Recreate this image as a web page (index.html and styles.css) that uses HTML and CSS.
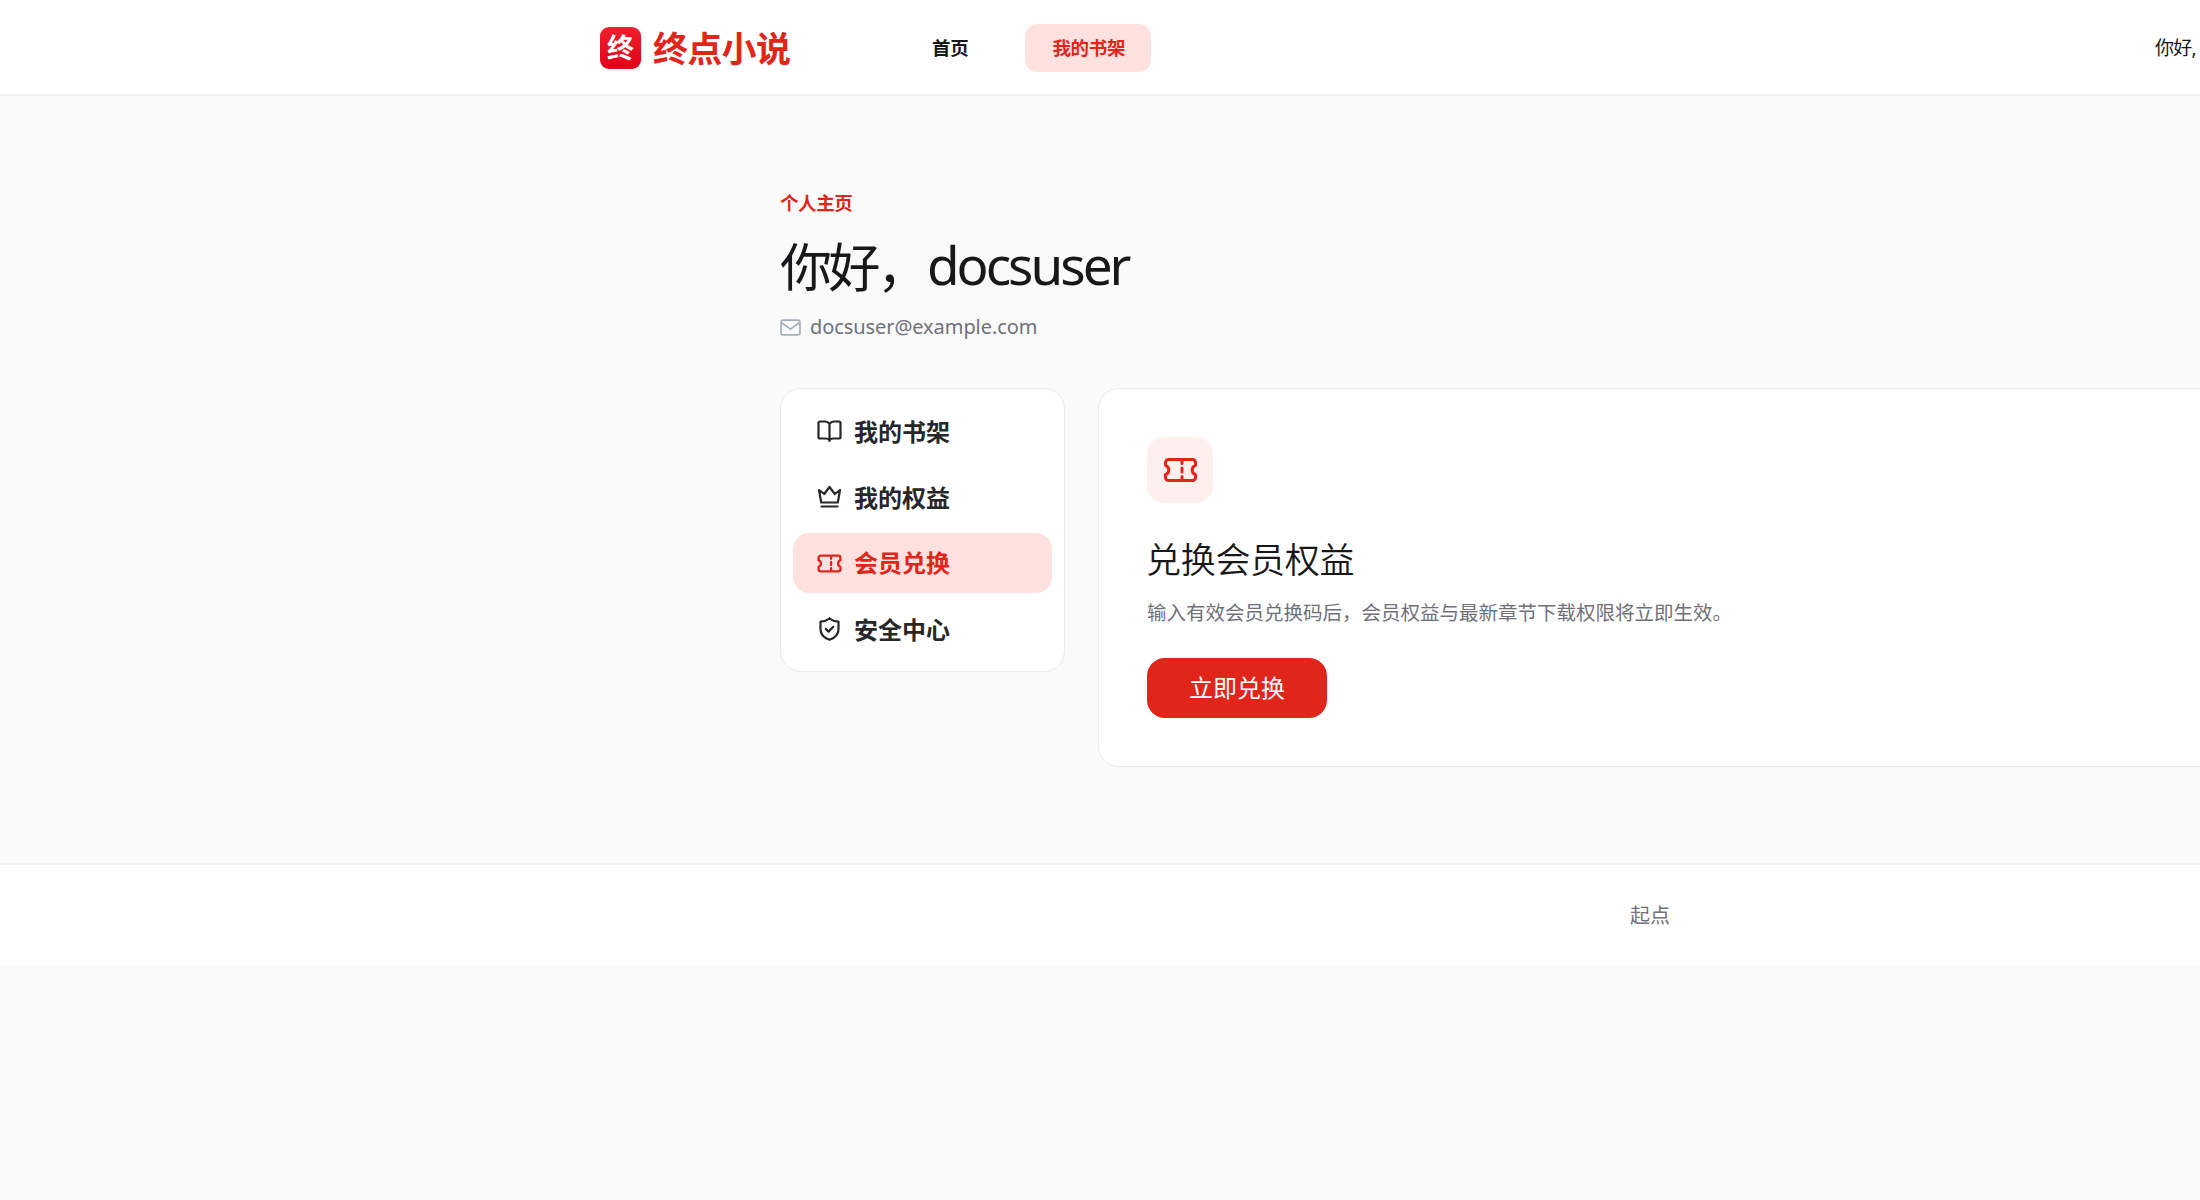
FILE: index.html
```
<!DOCTYPE html>
<html lang="zh-CN">
<head>
<meta charset="utf-8">
<title>终点小说</title>
<link rel="stylesheet" href="styles.css">
</head>
<body>
<div class="page">
  <header class="header">
    <div class="header-inner">
      <a class="logo"><span class="logo-mark">终</span><span class="logo-name">终点小说</span></a>
      <nav class="nav">
        <a class="nav-link">首页</a>
        <a class="nav-link is-active">我的书架</a>
      </nav>
      <div class="greeting">你好,</div>
    </div>
  </header>

  <main class="main">
    <div class="eyebrow">个人主页</div>
    <h1 class="title"><span class="title-hello">你好，</span><span class="title-name">docsuser</span></h1>
    <div class="email">
      <svg class="mail-icon" viewBox="0 0 20 16"><rect x="1" y="1" width="18" height="14" rx="1.5"/><path d="M1.5 3.5 10 9.5l8.500-6"/></svg>
      <span>docsuser@example.com</span>
    </div>
    <div class="columns">
      <aside class="sidebar">
        <a class="item"><svg class="icon" viewBox="0 0 24 24"><path d="M12 5v17M12 5c-1-1.500-2.500-2.500-4.500-2.500H2.500A1.500 1.500 0 0 0 1 4v14a1.500 1.500 0 0 0 1.500 1.500H8c2 0 3.300.4 4 1.500.7-1.100 2-1.500 4-1.500h5.500A1.500 1.500 0 0 0 23 18V4a1.500 1.500 0 0 0-1.500-1.500h-5C14.500 2.500 13 3.500 12 5"/></svg><span>我的书架</span></a>
        <a class="item"><svg class="icon" viewBox="0 0 24 24"><path d="M1.500 5 6.700 9 12 2l5.300 7 5.200-4-2.200 12.500H3.700zM4 21.500h16"/></svg><span>我的权益</span></a>
        <a class="item is-active"><svg class="icon wide" viewBox="0 0 24 18"><path d="M3.500 1.500h17a2 2 0 0 1 2 2v2.300a3.400 3.400 0 0 0 0 6.400v2.300a2 2 0 0 1-2 2h-17a2 2 0 0 1-2-2v-2.300a3.400 3.400 0 0 0 0-6.400V3.500a2 2 0 0 1 2-2M13.500 1.500v3M13.500 7.500v3M13.500 13.500v3"/></svg><span>会员兑换</span></a>
        <a class="item"><svg class="icon" viewBox="0 0 24 24"><path d="M12 1.500c2.500 2 5.500 3 9 3.200v7.500c0 5.300-4 8.800-9 10.600-5-1.800-9-5.300-9-10.600V4.700C6.500 4.500 9.500 3.500 12 1.500M8.300 12l2.700 2.600 4.800-4.800"/></svg><span>安全中心</span></a>
      </aside>
      <section class="card">
        <div class="tile"><svg class="tile-icon" viewBox="0 0 33 24"><path d="M4.500 1.500h24a3 3 0 0 1 3 3v2.800a5 5 0 0 0 0 9.400v2.800a3 3 0 0 1-3 3h-24a3 3 0 0 1-3-3v-2.800a5 5 0 0 0 0-9.400V4.500a3 3 0 0 1 3-3M18 1.500v4M18 10v4M18 18.500v4"/></svg></div>
        <h2 class="card-title">兑换会员权益</h2>
        <p class="card-text">输入有效会员兑换码后，会员权益与最新章节下载权限将立即生效。</p>
        <button class="button">立即兑换</button>
      </section>
    </div>
  </main>

  <footer class="footer">起点</footer>
</div>
</body>
</html>
```
FILE: styles.css
```
* { box-sizing: border-box; }
html { overflow: hidden; background: #fafafa; }
body {
  margin: 0;
  overflow: hidden;
  background: #fafafa;
  color: #18181b;
  font-family: "Noto Sans", "Noto Sans CJK SC", sans-serif;
}
svg { fill: none; stroke: currentColor; stroke-linecap: round; stroke-linejoin: round; flex: none; }
.page { width: 2200px; }

.header { height: 96px; background: #fff; border-bottom: 2px solid #f2f2f3; }
.header-inner { height: 96px; padding-left: 600px; display: flex; align-items: center; }
.logo { display: flex; align-items: center; gap: 12px; width: 304px; color: #e1251b; }
.logo-mark {
  width: 41px; height: 42px; border-radius: 9px;
  background: linear-gradient(#f0202d, #e00018);
  color: #fff; font-size: 27px; font-weight: 600; line-height: 41px; text-align: center;
}
.logo-name { font-size: 35px; font-weight: 700; line-height: 42px; letter-spacing: -0.7px; padding-top: 2px; }
.nav { display: flex; gap: 30px; }
.nav-link { height: 48px; padding: 0 27px 0 28px; border-radius: 12px; font-size: 18.5px; line-height: 47px; font-weight: 600; letter-spacing: -0.3px; color: #18181b; white-space: nowrap; }
.nav-link.is-active { width: 126px; padding: 0 27px; background: #ffe2e0; color: #e1251b; }
.greeting { margin-left: auto; width: 45px; font-size: 19px; line-height: 28px; letter-spacing: -0.8px; white-space: nowrap; }

.main { height: 767px; padding: 93px 0 0 780px; }
.eyebrow { font-size: 18.5px; line-height: 27px; font-weight: 600; letter-spacing: -0.4px; color: #e1251b; }
.title { display: flex; margin: 10px 0 0; line-height: 76px; font-weight: 400; }
.title-hello { width: 147px; padding-top: 3px; font-size: 52px; letter-spacing: -3.500px; white-space: nowrap; }
.title-name { padding-top: 1px; font-size: 53px; letter-spacing: -3px; }
.email { display: flex; align-items: center; gap: 9px; height: 28px; margin-top: 7px; font-size: 20px; letter-spacing: -0.080px; color: #71717a; }
.mail-icon { width: 21px; height: 17px; margin-top: 2px; color: #a5afbc; stroke-width: 1.600; }
.columns { display: grid; grid-template-columns: 285px 1fr; gap: 33px; align-items: start; margin-top: 48px; }

.sidebar { display: grid; gap: 6px; height: 284px; padding: 12px; background: #fff; border: 1.500px solid #eaeaec; border-radius: 21px; }
.item { display: flex; align-items: center; gap: 12px; height: 60px; padding: 0 24px; border-radius: 16px; font-size: 24px; font-weight: 600; color: #27272a; }
.item span { margin-top: -1px; }
.item.is-active span { margin-top: -4px; }
.item.is-active { background: #ffe2e0; color: #e1251b; }
.icon { width: 25px; height: 24px; stroke-width: 2.200; }
.icon.wide { height: 19px; }

.card { height: 379px; padding: 48px; background: #fff; border: 1.500px solid #eaeaec; border-right: 0; border-radius: 21px 0 0 21px; }
.tile { display: grid; place-items: center; width: 66px; height: 66px; border-radius: 17px; background: #ffefee; color: #e1251b; }
.tile-icon { width: 33px; height: 24px; stroke-width: 3; margin-top: -1px; }
.card-title { margin: 32px 0 0 -1px; font-size: 35px; line-height: 50px; font-weight: 350; letter-spacing: -0.300px; }
.card-text { margin: 13px 0 0; font-size: 19.500px; line-height: 30px; color: #71717a; white-space: nowrap; }
.button { display: block; width: 180px; height: 60px; margin: 30px 0 0; padding: 0; border: 0; border-radius: 18px; background: #e1251b; color: #fff; font: 400 24px/60px "Noto Sans", "Noto Sans CJK SC", sans-serif; }

.footer { height: 102px; padding-left: 1630px; border-top: 2px solid #f2f2f3; background: #fff; color: #71717a; font-size: 20px; line-height: 102px; }
```
